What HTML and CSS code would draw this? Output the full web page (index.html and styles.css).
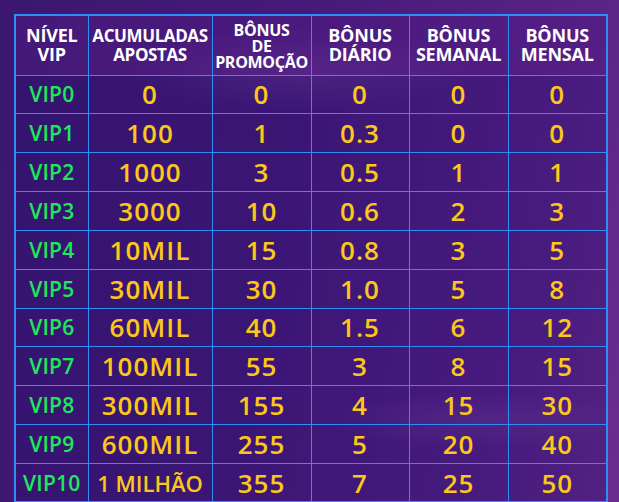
FILE: index.html
```html
<!DOCTYPE html>
<html lang="pt">
<head>
<meta charset="utf-8">
<title>Tabela VIP</title>
<link rel="stylesheet" href="styles.css">
</head>
<body>
<div class="stage">
  <table class="vip">
    <colgroup>
      <col class="c1"><col class="c2"><col class="c3"><col class="c4"><col class="c5"><col class="c6">
    </colgroup>
    <thead>
      <tr>
        <th>NÍVEL<br>VIP</th>
        <th class="tight">ACUMULADAS<br>APOSTAS</th>
        <th class="three">BÔNUS<br>DE<br>PROMOÇÃO</th>
        <th>BÔNUS<br>DIÁRIO</th>
        <th>BÔNUS<br>SEMANAL</th>
        <th>BÔNUS<br>MENSAL</th>
      </tr>
    </thead>
    <tbody>
      <tr><td class="lvl">VIP0</td><td>0</td><td>0</td><td>0</td><td>0</td><td>0</td></tr>
      <tr><td class="lvl">VIP1</td><td>100</td><td>1</td><td>0.3</td><td>0</td><td>0</td></tr>
      <tr><td class="lvl">VIP2</td><td>1000</td><td>3</td><td>0.5</td><td>1</td><td>1</td></tr>
      <tr><td class="lvl">VIP3</td><td>3000</td><td>10</td><td>0.6</td><td>2</td><td>3</td></tr>
      <tr><td class="lvl">VIP4</td><td>10MIL</td><td>15</td><td>0.8</td><td>3</td><td>5</td></tr>
      <tr><td class="lvl">VIP5</td><td>30MIL</td><td>30</td><td>1.0</td><td>5</td><td>8</td></tr>
      <tr><td class="lvl">VIP6</td><td>60MIL</td><td>40</td><td>1.5</td><td>6</td><td>12</td></tr>
      <tr><td class="lvl">VIP7</td><td>100MIL</td><td>55</td><td>3</td><td>8</td><td>15</td></tr>
      <tr><td class="lvl">VIP8</td><td>300MIL</td><td>155</td><td>4</td><td>15</td><td>30</td></tr>
      <tr><td class="lvl">VIP9</td><td>600MIL</td><td>255</td><td>5</td><td>20</td><td>40</td></tr>
      <tr><td class="lvl">VIP10</td><td class="small">1 MILHÃO</td><td>355</td><td>7</td><td>25</td><td>50</td></tr>
    </tbody>
  </table>
</div>
</body>
</html>
```

FILE: styles.css
```css
html, body {
  margin: 0;
  padding: 0;
}

body {
  width: 619px;
  height: 502px;
  overflow: hidden;
  font-family: "Open Sans", "Liberation Sans", sans-serif;
  background-color: #4a1c7c;
  background-image:
    radial-gradient(ellipse 260px 60px at 300px 70px, rgba(200, 140, 230, 0.18), rgba(200, 140, 230, 0) 70%),
    radial-gradient(ellipse 220px 40px at 480px 420px, rgba(200, 140, 230, 0.16), rgba(200, 140, 230, 0) 70%),
    linear-gradient(100deg, #3b1770 0%, #461a7a 45%, #5a2388 85%, #6b2e90 100%);
}

.stage {
  padding: 14px 0 0 14px;
}

.vip {
  border-collapse: collapse;
  table-layout: fixed;
  width: 592px;
  border: 2px solid #2b8ff5;
  background: rgba(40, 14, 110, 0.35);
}

.c1 { width: 73px; }
.c2 { width: 124px; }
.c3 { width: 99px; }
.c4 { width: 98px; }
.c5 { width: 99px; }
.c6 { width: 99px; }

.vip th,
.vip td {
  border: 1px solid #2b8ff5;
  text-align: center;
  vertical-align: middle;
  padding: 0;
  white-space: nowrap;
}

.vip thead tr {
  height: 60px;
  background: rgba(120, 40, 150, 0.25);
}

.vip th {
  color: #ffffff;
  font-weight: 700;
  font-size: 18px;
  line-height: 19px;
  letter-spacing: -0.2px;
}

.vip th.tight {
  font-size: 17px;
  letter-spacing: -0.4px;
}

.vip th.three {
  font-size: 16px;
  line-height: 16px;
  letter-spacing: -0.3px;
  padding-top: 2px;
}

.vip tbody tr {
  height: 38.85px;
}

.vip td {
  color: #fbc71a;
  font-weight: 600;
  font-size: 26px;
  line-height: 28px;
  letter-spacing: 1px;
}

.vip td.lvl {
  color: #1ee85a;
  font-weight: 600;
  font-size: 21px;
  letter-spacing: 0.2px;
}

.vip td.small {
  font-size: 22px;
  letter-spacing: 0;
}
```
